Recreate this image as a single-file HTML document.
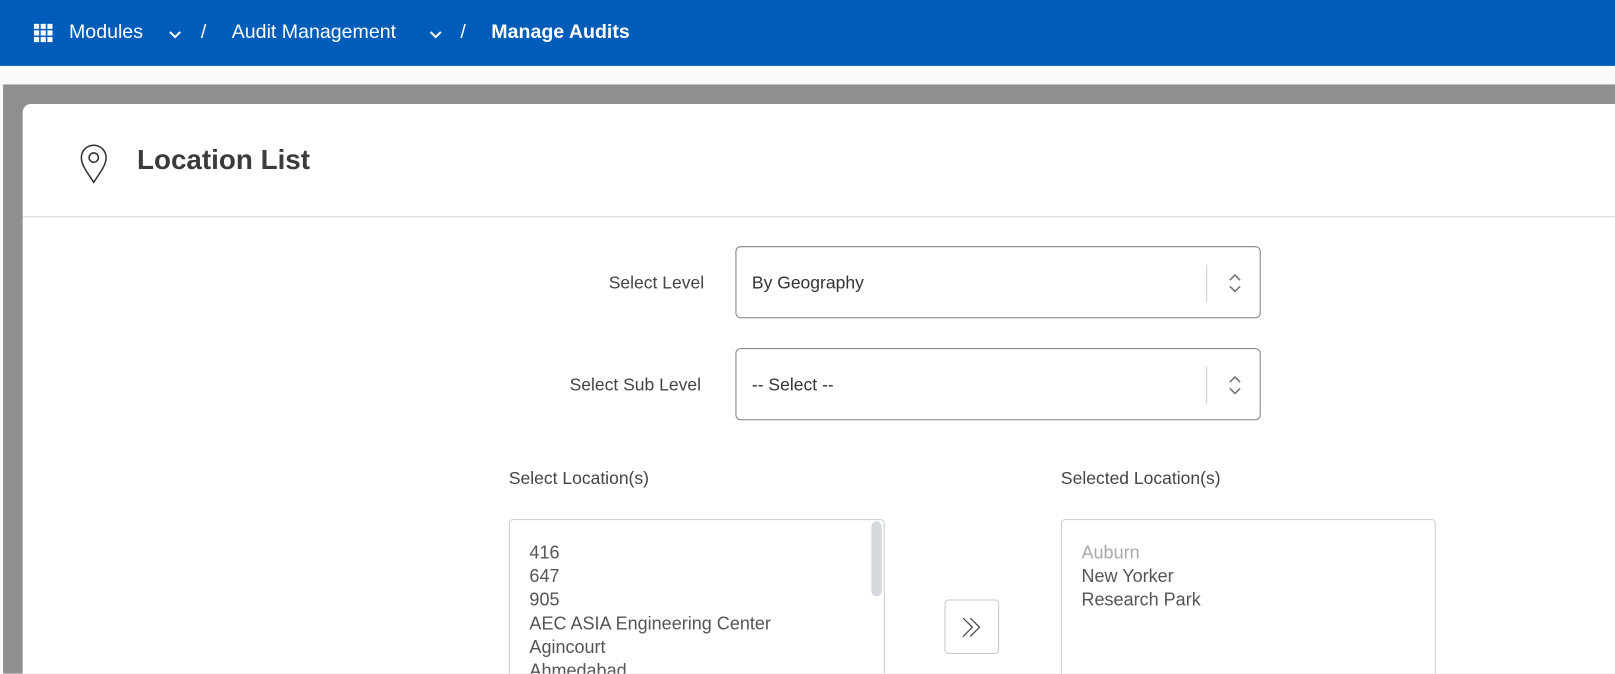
<!DOCTYPE html>
<html><head><style>
*{margin:0;padding:0;box-sizing:border-box}
body{width:1615px;height:673px;overflow:hidden;font-family:"Liberation Sans",sans-serif;background:#fafafa;position:relative}
.wrap{position:absolute;left:0;top:0;width:1568px;height:654px;transform:scale(1.03);transform-origin:0 0;overflow:hidden}
.top{position:absolute;left:0;top:0;width:1568px;height:64px;background:#005cb9;color:#fff;font-size:19px}
.top span{position:absolute;top:21px}
.gray{position:absolute;left:3px;top:82px;width:1570px;height:600px;background:#8f8f8f}
.card{position:absolute;left:22px;top:101px;width:1600px;height:600px;background:#fff;border-radius:8px 0 0 0}
.title{position:absolute;left:133px;top:140px;font-size:27px;font-weight:bold;color:#3b3b3b}
.hr{position:absolute;left:22px;top:210px;width:1600px;height:1px;background:#d8d8d8}
.lbl{position:absolute;font-size:17px;color:#444}
.sel{position:absolute;left:714px;width:510px;height:70px;border:1px solid #7c818a;border-radius:5px;font-size:17px;color:#333}
.sel .t{position:absolute;left:15px;top:25px}
.sel .d{position:absolute;left:456px;top:17px;width:1px;height:36px;background:#c8cdd6}
.sel svg{position:absolute;left:477px;top:25px}
.box{position:absolute;top:504px;height:180px;border:1px solid #c4cdd6;border-radius:4px;font-size:17.5px;color:#555;line-height:23px;padding:20px 19px}
</style></head><body><div class="wrap">
<div class="top">
<svg style="position:absolute;left:33px;top:23px" width="18" height="18" viewBox="0 0 18 18" fill="#fff"><rect x="0" y="0" width="5" height="5"/><rect x="6.5" y="0" width="5" height="5"/><rect x="13" y="0" width="5" height="5"/><rect x="0" y="6.5" width="5" height="5"/><rect x="6.5" y="6.5" width="5" height="5"/><rect x="13" y="6.5" width="5" height="5"/><rect x="0" y="13" width="5" height="5"/><rect x="6.5" y="13" width="5" height="5"/><rect x="13" y="13" width="5" height="5"/></svg>
<span style="left:67px">Modules</span>
<svg style="position:absolute;left:164px;top:30px" width="12" height="8" viewBox="0 0 12 8"><path d="M1 1l5 5 5-5" stroke="#fff" stroke-width="2" fill="none"/></svg>
<span style="left:195px">/</span>
<span style="left:225px">Audit Management</span>
<svg style="position:absolute;left:417px;top:30px" width="12" height="8" viewBox="0 0 12 8"><path d="M1 1l5 5 5-5" stroke="#fff" stroke-width="2" fill="none"/></svg>
<span style="left:447px">/</span>
<span style="left:477px;font-weight:bold">Manage Audits</span>
</div>
<div class="gray"></div>
<div class="card"></div>
<svg style="position:absolute;left:77px;top:139px" width="28" height="40" viewBox="0 0 28 40"><path d="M14 38 C9 30 2 22 2 14 A12 12 0 0 1 26 14 C26 22 19 30 14 38Z" fill="none" stroke="#333" stroke-width="1.5"/><circle cx="14" cy="14" r="4.5" fill="none" stroke="#333" stroke-width="1.5"/></svg>
<div class="title">Location List</div>
<div class="hr"></div>
<div class="lbl" style="left:591px;top:265px">Select Level</div>
<div class="sel" style="top:239px"><div class="t">By Geography</div><div class="d"></div><svg width="14" height="20" viewBox="0 0 14 20"><path d="M2 7l5-5 5 5M2 13l5 5 5-5" stroke="#777" stroke-width="1.6" fill="none"/></svg></div>
<div class="lbl" style="left:553px;top:364px">Select Sub Level</div>
<div class="sel" style="top:338px"><div class="t">-- Select --</div><div class="d"></div><svg width="14" height="20" viewBox="0 0 14 20"><path d="M2 7l5-5 5 5M2 13l5 5 5-5" stroke="#777" stroke-width="1.6" fill="none"/></svg></div>
<div class="lbl" style="left:494px;top:455px">Select Location(s)</div>
<div class="lbl" style="left:1030px;top:455px">Selected Location(s)</div>
<div class="box" style="left:494px;width:365px">416<br>647<br>905<br>AEC ASIA Engineering Center<br>Agincourt<br>Ahmedabad</div>
<div style="position:absolute;left:846px;top:506px;width:10px;height:73px;background:#d5d8dc;border-radius:5px"></div>
<div style="position:absolute;left:917px;top:582px;width:53px;height:53px;border:1px solid #c4c8cc;border-radius:4px;background:#fff"><svg style="position:absolute;left:14px;top:14px" width="24" height="24" viewBox="0 0 24 24"><path d="M3 3l9 9-9 9M10 3l9 9-9 9" stroke="#444" stroke-width="1.2" fill="none"/></svg></div>
<div class="box" style="left:1030px;width:364px"><span style="color:#aaa">Auburn</span><br>New Yorker<br>Research Park</div>
</div></body></html>
